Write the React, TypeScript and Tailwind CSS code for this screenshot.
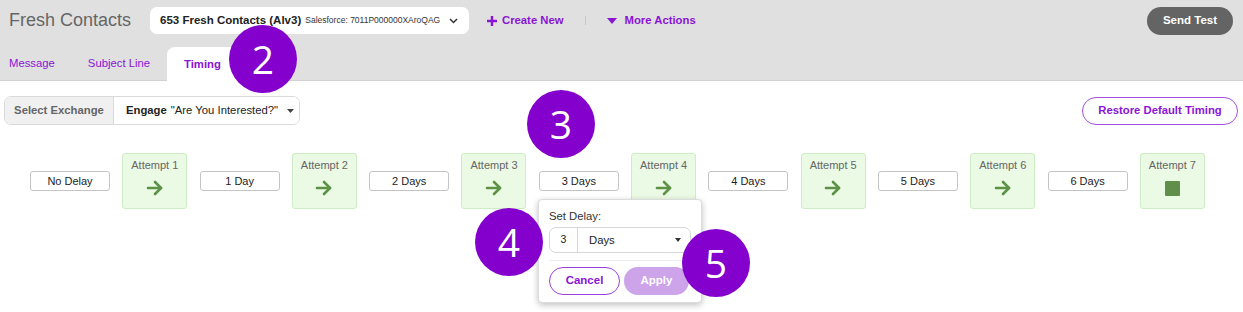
import React from "react";

const P = "text-[#8a14d6]";

function Arrow() {
  return (
    <svg width="18" height="16" viewBox="0 0 18 16" fill="none" stroke="#5d9146" strokeWidth="2.6" strokeLinecap="round" strokeLinejoin="round">
      <path d="M2 8 H15" />
      <path d="M9 2 L15 8 L9 14" />
    </svg>
  );
}

function Attempt({ n, last }: { n: number; last?: boolean }) {
  return (
    <div className="w-[65px] h-[56px] shrink-0 rounded-[3px] border border-[#cdeec4] bg-[#eafae4] flex flex-col items-center pt-[5px]">
      <div className="text-[11px] text-[#666] leading-[13px] whitespace-nowrap">Attempt {n}</div>
      <div className="mt-[8px] h-[16px] flex items-center">
        {last ? <div className="w-[15px] h-[15px] bg-[#5f8f4a] rounded-[1px]" /> : <Arrow />}
      </div>
    </div>
  );
}

function Delay({ label }: { label: string }) {
  return (
    <div className="w-[80px] h-[20px] shrink-0 rounded-[3px] border border-[#c4c4c4] bg-white flex items-center justify-center text-[11px] text-[#222] whitespace-nowrap">
      {label}
    </div>
  );
}

function Badge({ n, cls }: { n: string; cls: string }) {
  return (
    <div
      className={`absolute w-[68px] h-[68px] rounded-full bg-[#8400cc] text-white flex items-center justify-center text-[39px] ${cls}`}
      style={{ fontFamily: '"Open Sans", sans-serif', fontWeight: 400 }}
    >
      {n}
    </div>
  );
}

export default function App() {
  const delays = ["No Delay", "1 Day", "2 Days", "3 Days", "4 Days", "5 Days", "6 Days"];
  return (
    <div className="relative w-[1243px] h-[312px] overflow-hidden bg-white whitespace-nowrap" style={{ fontFamily: '"Liberation Sans", Arial, sans-serif' }}>
      <div className="bg-[#e0e0e0] h-[81px] pt-[7px] border-b border-[#d2d2d2]">
        <div className="flex items-center h-[27px] pl-[9px] pr-[10px]">
          <div className="text-[18px] text-[#666] w-[141px] shrink-0">Fresh Contacts</div>
          <div className="w-[319px] h-[27px] shrink-0 bg-white rounded-[7px] flex items-center pl-[10px] pr-[11px]">
            <span className="text-[11.5px] font-bold text-[#222]">653 Fresh Contacts (Alv3)</span>
            <span className="text-[8.5px] text-[#333] ml-[4px]">Salesforce: 7011P000000XAroQAG</span>
            <svg className="ml-auto" width="9" height="6" viewBox="0 0 9 6" fill="none" stroke="#333" strokeWidth="1.5"><path d="M1 1 L4.5 4.5 L8 1" /></svg>
          </div>
          <div className={`ml-[18px] flex items-center text-[11.3px] font-bold ${P}`}>
            <svg width="10" height="10" viewBox="0 0 10 10" className="mr-[5px]"><path d="M5 0 V10 M0 5 H10" stroke="#8a14d6" strokeWidth="2.4" /></svg>
            Create New
          </div>
          <div className="ml-[21px] w-px h-[9px] bg-[#c8c8c8]" />
          <div className={`ml-[21px] flex items-center text-[11.3px] font-bold ${P}`}>
            <svg width="10" height="6" viewBox="0 0 10 6" className="mr-[8px]"><path d="M0 0 H10 L5 6 Z" fill="#8a14d6" /></svg>
            More Actions
          </div>
          <div className="ml-auto w-[86px] h-[28px] rounded-full bg-[#646464] text-white text-[11.5px] font-bold flex items-center justify-center">Send Test</div>
        </div>
        <div className="flex items-end h-[33px] mt-[13px] pl-[9px]">
          <div className={`h-[33px] flex items-center text-[11.3px] ${P}`}>Message</div>
          <div className={`ml-[33px] h-[33px] flex items-center text-[11.3px] ${P}`}>Subject Line</div>
          <div className={`ml-[17px] h-[34px] -mb-px bg-white rounded-t-[8px] px-[17px] flex items-center text-[11.3px] font-bold ${P}`}>Timing</div>
        </div>
      </div>

      <div className="flex items-center justify-between pl-[4px] pr-[5px] pt-[15px]">
        <div className="flex h-[29px] rounded-[7px] border border-[#dadada] overflow-hidden">
          <div className="w-[109px] bg-[#f0f0f0] border-r border-[#dadada] text-[11.3px] font-bold text-[#666] flex items-center justify-center">Select Exchange</div>
          <div className="w-[185px] bg-white flex items-center pl-[12px] text-[11.3px] text-[#222]">
            <span className="font-bold">Engage</span>
            <span className="ml-[4px]">"Are You Interested?"</span>
            <svg className="ml-[9px]" width="7" height="4" viewBox="0 0 7 4"><path d="M0 0 H7 L3.5 4 Z" fill="#444" /></svg>
          </div>
        </div>
        <div className={`w-[156px] h-[28px] rounded-full border border-[#a44fe0] text-[11.3px] font-bold flex items-center justify-center ${P}`}>Restore Default Timing</div>
      </div>

      <div className="flex items-center gap-[12.3px] pl-[30px] pt-[28px]">
        {delays.map((d, i) => (
          <React.Fragment key={d}>
            <Delay label={d} />
            <Attempt n={i + 1} last={i === 6} />
          </React.Fragment>
        ))}
      </div>

      <div className="absolute left-[538px] top-[199px] w-[164px] h-[104px] bg-white rounded-[4px] border border-[#dcdcdc] shadow-[0_2px_6px_rgba(0,0,0,0.25)] px-[10px] pt-[9px]">
        <div className="text-[11.3px] text-[#333] leading-[14px]">Set Delay:</div>
        <div className="mt-[4px] h-[26px] flex rounded-[7px] border border-[#d6d6d6]">
          <div className="w-[28px] border-r border-[#d6d6d6] flex items-center justify-center text-[10.5px] text-[#222]">3</div>
          <div className="flex-1 flex items-center pl-[11px] pr-[9px] text-[11.3px] text-[#222]">
            Days
            <svg className="ml-auto" width="6" height="4" viewBox="0 0 6 4"><path d="M0 0 H6 L3 4 Z" fill="#333" /></svg>
          </div>
        </div>
        <div className="mt-[7px] h-px bg-[#ececec]" />
        <div className="mt-[6px] flex gap-[4px]">
          <div className={`w-[71px] h-[28px] rounded-full border border-[#9a3fdc] text-[11.5px] font-bold flex items-center justify-center ${P}`}>Cancel</div>
          <div className="w-[65px] h-[28px] rounded-full bg-[#cda3ea] text-white text-[11.5px] font-bold flex items-center justify-center">Apply</div>
        </div>
      </div>

      <Badge n="2" cls="left-[229px] top-[25px]" />
      <Badge n="3" cls="left-[527px] top-[90px]" />
      <Badge n="4" cls="left-[475px] top-[208px]" />
      <Badge n="5" cls="left-[682px] top-[229px]" />
    </div>
  );
}
